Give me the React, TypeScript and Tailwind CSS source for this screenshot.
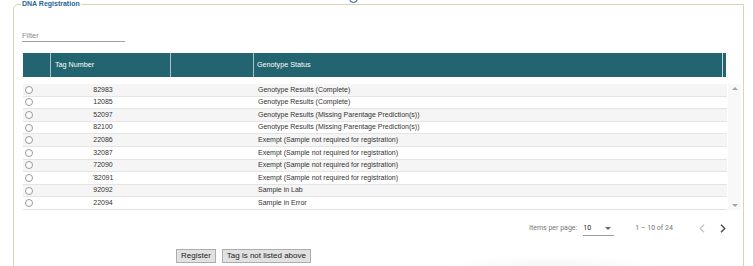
import React from 'react';

const rows = [
  { tag: '82983', status: 'Genotype Results (Complete)' },
  { tag: '12085', status: 'Genotype Results (Complete)' },
  { tag: '52097', status: 'Genotype Results (Missing Parentage Prediction(s))' },
  { tag: '82100', status: 'Genotype Results (Missing Parentage Prediction(s))' },
  { tag: '22086', status: 'Exempt (Sample not required for registration)' },
  { tag: '32087', status: 'Exempt (Sample not required for registration)' },
  { tag: '72090', status: 'Exempt (Sample not required for registration)' },
  { tag: "'82091", status: 'Exempt (Sample not required for registration)' },
  { tag: '92092', status: 'Sample in Lab' },
  { tag: '22094', status: 'Sample in Error' },
];

function Chevron({ dir, color }: { dir: 'left' | 'right'; color: string }) {
  return (
    <svg width="6" height="9" viewBox="0 0 6 9" fill="none">
      <path
        d={dir === 'left' ? 'M5 0.8 L1.2 4.5 L5 8.2' : 'M1 0.8 L4.8 4.5 L1 8.2'}
        stroke={color}
        strokeWidth="1.3"
      />
    </svg>
  );
}

export default function App() {
  return (
    <div className="relative w-[753px] h-[266px] overflow-hidden bg-white font-['Liberation_Sans',Arial,sans-serif]">
      <div className="absolute left-[349px] top-[-6px] w-[9px] h-[9px] rounded-full border-[1.5px] border-[#1f4e8c]" />

      <fieldset className="ml-[13px] w-[731px] h-[320px] border border-[#dad2b2] rounded-tl-[5px] pl-[8px] pr-[1px]">
        <legend className="ml-[-1px] px-[1px] text-[7px] leading-[8px] font-bold text-[#2a6496]">
          DNA Registration
        </legend>

        {/* filter */}
        <div className="mt-[23px] w-[103px] border-b border-[#a0a0a0] pb-[1px] text-[7.5px] leading-[9px] text-[#8a8a8a]">
          Filter
        </div>

        {/* header */}
        <div className="mt-[11px] ml-[1px] flex h-[24px] w-[703px] bg-[#22646f] text-[7.2px] text-white">
          <div className="w-[27px]" />
          <div className="w-[120px] border-l border-[#a9c4c9] pl-[4px] flex items-center">Tag Number</div>
          <div className="w-[83px] border-l border-[#a9c4c9]" />
          <div className="w-[469px] border-l border-[#a9c4c9] pl-[3px] flex items-center">Genotype Status</div>
          <div className="w-[4px] border-l border-[#c9dadd]" />
        </div>

        {/* body */}
        <div className="mt-[7px] ml-[1px] flex">
          <div className="w-[704px]">
            {rows.map((r, i) => (
              <div
                key={r.tag}
                className={`flex items-center h-[12.6px] border-b border-[#e4e4e4] text-[7px] text-[#333] ${
                  i % 2 === 0 ? 'bg-[#f5f5f5]' : 'bg-white'
                }`}
              >
                <div className="w-[27px] pl-[2px] flex items-center">
                  <div className="w-[8px] h-[8px] rounded-full border border-[#9a9a9a] bg-white" />
                </div>
                <div className="w-[106px] text-center">{r.tag}</div>
                <div className="w-[98px]" />
                <div className="pl-[4px]">{r.status}</div>
              </div>
            ))}
          </div>
          <div className="ml-[1px] w-[13px] h-[126px] bg-[#f8f8f8] flex flex-col items-center justify-between py-[3px]">
            <div className="w-0 h-0 border-l-[3px] border-r-[3px] border-b-[3px] border-l-transparent border-r-transparent border-b-[#a3a3a3]" />
            <div className="w-0 h-0 border-l-[3px] border-r-[3px] border-t-[3px] border-l-transparent border-r-transparent border-t-[#a3a3a3]" />
          </div>
        </div>

        {/* paginator */}
        <div className="mt-[8px] ml-[1px] flex h-[20px] w-max items-center whitespace-nowrap pl-[506px] font-['Roboto',Arial,sans-serif] text-[7px] text-[#757575]">
          <span className="shrink-0">Items per page:</span>
          <div className="ml-[6px] flex h-[14px] w-[31px] shrink-0 items-center justify-between border-b border-[#9e9e9e] pr-[3px] mt-[1px]">
            <span className="text-[#222]">10</span>
            <div className="w-0 h-0 border-l-[3px] border-r-[3px] border-t-[3px] border-l-transparent border-r-transparent border-t-[#666]" />
          </div>
          <span className="ml-[21px] shrink-0">1 – 10 of 24</span>
          <div className="ml-[26px] flex shrink-0 items-center">
            <Chevron dir="left" color="#c2c2c2" />
          </div>
          <div className="ml-[15px] flex shrink-0 items-center">
            <Chevron dir="right" color="#444" />
          </div>
        </div>

        {/* buttons */}
        <div className="mt-[11px] flex gap-[6px] pl-[154px]">
          <button className="h-[14px] border border-[#adadad] bg-[#e1e1e1] px-[4px] text-[8px] leading-[12px] text-[#222]">
            Register
          </button>
          <button className="h-[14px] border border-[#adadad] bg-[#e1e1e1] px-[4px] text-[8px] leading-[12px] text-[#222]">
            Tag is not listed above
          </button>
        </div>
      </fieldset>

      <div className="absolute left-[440px] top-[254px] w-[220px] h-[30px] bg-[radial-gradient(ellipse_at_center,rgba(0,0,0,0.045),transparent_70%)]" />
    </div>
  );
}
